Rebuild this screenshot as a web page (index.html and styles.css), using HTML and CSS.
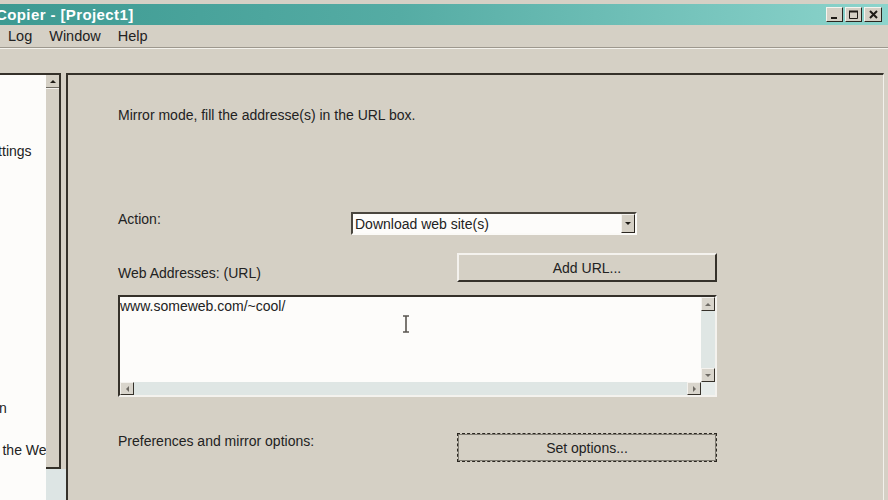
FILE: index.html
```html
<!DOCTYPE html>
<html lang="en">
<head>
    <meta charset="UTF-8">
    <title>Copier - [Project1]</title>
    <link rel="stylesheet" href="styles.css">
</head>
<body>
    <div class="window">
        <div class="titlebar">
            <span class="title">Copier - [Project1]</span>
            <div class="caption-buttons">
                <div class="cap-btn">
                    <svg width="9" height="9" viewBox="0 0 9 9"><rect x="1" y="7" width="6" height="2" fill="#1e1b16"/></svg>
                </div>
                <div class="cap-btn max">
                    <svg width="9" height="9" viewBox="0 0 9 9"><path d="M0.5 1.5h8v7h-8z" fill="none" stroke="#1e1b16"/><rect x="0" y="0.5" width="9" height="2" fill="#1e1b16"/></svg>
                </div>
                <div class="cap-btn close">
                    <svg width="9" height="9" viewBox="0 0 9 9"><path d="M1 1L8 8M8 1L1 8" stroke="#1e1b16" stroke-width="2"/></svg>
                </div>
            </div>
        </div>

        <div class="menubar">
            <span class="menu-item">Log</span>
            <span class="menu-item">Window</span>
            <span class="menu-item">Help</span>
        </div>
        <div class="toolbar"></div>

        <div class="workspace">
            <div class="tree-col">
                <div class="tree-list">
                    <div class="tree-item item-settings">Settings</div>
                    <div class="tree-item item-action">Action</div>
                    <div class="tree-item item-web">on the Web</div>
                </div>
                <div class="tree-side">
                    <div class="tree-side-top">
                        <div class="tree-scroll">
                            <div class="tree-scroll-up"><span class="arrow up"></span></div>
                        </div>
                    </div>
                    <div class="tree-side-bottom"></div>
                </div>
            </div>

            <div class="pane">
                <div class="intro">Mirror mode, fill the addresse(s) in the URL box.</div>

                <div class="row row-action">
                    <span class="label label-action">Action:</span>
                    <div class="combo">
                        <span class="combo-text">Download web site(s)</span>
                        <span class="combo-btn"><span class="arrow down dark"></span></span>
                    </div>
                </div>

                <div class="row row-web">
                    <span class="label label-web">Web Addresses: (URL)</span>
                    <button class="button">Add URL...</button>
                </div>

                <div class="urlbox">
                    <div class="url-text">
                        www.someweb.com/~cool/
                        <svg class="ibeam" width="8" height="18" viewBox="0 0 8 18"><path d="M1 1h6M4 1v16M1 17h6" stroke="#5a5650" stroke-width="1.6" fill="none"/></svg>
                    </div>
                    <div class="vbar">
                        <div class="sb-btn"><span class="arrow up"></span></div>
                        <div class="sb-track"></div>
                        <div class="sb-btn"><span class="arrow down"></span></div>
                    </div>
                    <div class="hbar">
                        <div class="sb-btn"><span class="arrow left"></span></div>
                        <div class="sb-track"></div>
                        <div class="sb-btn"><span class="arrow right"></span></div>
                    </div>
                    <div class="sb-corner"></div>
                </div>

                <div class="row row-prefs">
                    <span class="label label-prefs">Preferences and mirror options:</span>
                    <button class="button default">Set options...</button>
                </div>
            </div>
        </div>
    </div>
</body>
</html>
```

FILE: styles.css
```css
body {
    margin: 0;
    background: #d5d0c5;
    font-family: "Liberation Sans", Arial, sans-serif;
    font-size: 14px;
    color: #222;
}
.window {
    width: 888px;
    height: 500px;
    overflow: hidden;
    padding-top: 4px;
    box-sizing: border-box;
    display: flex;
    flex-direction: column;
}

/* title bar */
.titlebar {
    height: 21px;
    flex: none;
    display: flex;
    align-items: center;
    overflow: hidden;
    background: linear-gradient(to right, #3d9a92, #55aca4 45%, #8cd4cc);
}
.title {
    flex: 1;
    margin-left: -4px;
    color: #fff;
    font-size: 15px;
    font-weight: bold;
    letter-spacing: 0.4px;
    white-space: nowrap;
}
.caption-buttons {
    display: flex;
    margin-right: 6px;
}
.cap-btn {
    width: 17px;
    height: 15px;
    box-sizing: border-box;
    background: #d5d0c5;
    border: 1px solid;
    border-color: #f6f4ef #2a2620 #2a2620 #f6f4ef;
    display: flex;
    align-items: center;
    justify-content: center;
}
.cap-btn.max {
    margin-left: 2px;
}
.cap-btn.close {
    margin-left: 2px;
    width: 18px;
}

/* menu */
.menubar {
    height: 22px;
    flex: none;
    display: flex;
    align-items: center;
    padding-left: 8px;
    font-size: 14.5px;
    border-bottom: 1px solid #9d988e;
}
.menu-item {
    margin-right: 17px;
}
.toolbar {
    height: 24px;
    flex: none;
    border-top: 1px solid #f4f2ec;
}

/* workspace */
.workspace {
    flex: 1;
    display: flex;
}
.tree-col {
    width: 66px;
    flex: none;
    display: flex;
}
.tree-list {
    width: 46px;
    background: #fdfcfa;
    border-top: 2px solid #35312a;
    overflow: hidden;
    white-space: nowrap;
}
.tree-item {
    line-height: 16px;
}
.item-settings {
    margin-top: 68px;
    margin-left: -19px;
}
.item-action {
    margin-top: 241px;
    margin-left: -32px;
}
.item-web {
    margin-top: 26px;
    margin-left: -17px;
}
.tree-side {
    width: 20px;
    display: flex;
    flex-direction: column;
}
.tree-side-top {
    height: 396px;
    flex: none;
}
.tree-scroll {
    width: 15px;
    height: 100%;
    box-sizing: border-box;
    border-top: 2px solid #35312a;
    border-right: 2px solid #35312a;
    border-bottom: 2px solid #35312a;
}
.tree-scroll-up {
    height: 13px;
    box-sizing: border-box;
    border-bottom: 1px solid #6e6a62;
    box-shadow: 0 1px 0 #f4f2ee;
    display: flex;
    align-items: center;
    justify-content: center;
}
.tree-side-bottom {
    flex: 1;
    background: #dde5e4;
}

/* main pane */
.pane {
    flex: 1;
    margin-right: 4px;
    padding-left: 50px;
    border-top: 2px solid #35312a;
    border-left: 2px solid #35312a;
    border-right: 1px solid #f3f1ec;
}
.intro {
    margin-top: 32px;
    line-height: 16px;
}
.row {
    display: flex;
    align-items: center;
}
.row-action {
    margin-top: 89px;
    height: 23px;
}
.label-action {
    width: 233px;
    margin-bottom: 9px;
}
.combo {
    width: 286px;
    height: 23px;
    box-sizing: border-box;
    border: 2px solid;
    border-color: #4a463e #fbfaf7 #fbfaf7 #4a463e;
    background: #fdfcfa;
    display: flex;
    align-items: center;
}
.combo-text {
    flex: 1;
    padding-left: 2px;
}
.combo-btn {
    width: 14px;
    height: 19px;
    box-sizing: border-box;
    background: #d5d0c5;
    border: 1px solid;
    border-color: #f4f2ee #2a2620 #2a2620 #f4f2ee;
    display: flex;
    align-items: center;
    justify-content: center;
}
.row-web {
    margin-top: 18px;
    height: 29px;
}
.label-web {
    width: 339px;
    margin-top: 11px;
}
.row-prefs {
    margin-top: 36px;
    height: 29px;
}
.label-prefs {
    width: 339px;
    margin-bottom: 13px;
}
.button {
    width: 260px;
    height: 29px;
    flex: none;
    box-sizing: border-box;
    padding: 0;
    background: #d5d0c5;
    border: 2px solid;
    border-color: #f4f2ee #35312a #35312a #f4f2ee;
    font-family: inherit;
    font-size: 14px;
    color: #222;
}
.button.default {
    border: 1px dashed #2a2620;
    box-shadow: inset 0 0 0 1px rgba(60, 56, 48, 0.55);
}

/* url box */
.urlbox {
    margin-top: 13px;
    width: 599px;
    height: 102px;
    box-sizing: border-box;
    border: 2px solid;
    border-color: #35312a #f4f2ee #f4f2ee #35312a;
    display: grid;
    grid-template-columns: 1fr 14px;
    grid-template-rows: 1fr 13px;
}
.url-text {
    position: relative;
    background: #fdfcfa;
    padding-top: 1px;
    line-height: 16px;
}
.ibeam {
    position: absolute;
    left: 282px;
    top: 18px;
}
.vbar {
    display: flex;
    flex-direction: column;
    background: #dfe6e4;
}
.hbar {
    display: flex;
    background: #dfe6e4;
}
.sb-track {
    flex: 1;
}
.sb-btn {
    width: 14px;
    height: 14px;
    flex: none;
    box-sizing: border-box;
    background: #d9d5cc;
    border: 1px solid;
    border-color: #f4f2ee #35312a #35312a #f4f2ee;
    display: flex;
    align-items: center;
    justify-content: center;
}
.hbar .sb-btn {
    height: 13px;
}
.sb-corner {
    background: #e7ecea;
}

/* small arrow glyphs */
.arrow {
    width: 0;
    height: 0;
    border: 3px solid transparent;
}
.arrow.up {
    border-top: 0;
    border-bottom: 3px solid #6f6b64;
}
.arrow.down {
    border-bottom: 0;
    border-top: 3px solid #6f6b64;
}
.arrow.left {
    border-left: 0;
    border-right: 3px solid #6f6b64;
}
.arrow.right {
    border-right: 0;
    border-left: 3px solid #6f6b64;
}
.arrow.dark {
    border-top-color: #1e1b16;
}
.tree-scroll-up .arrow.up {
    border-bottom-color: #1e1b16;
}
```
